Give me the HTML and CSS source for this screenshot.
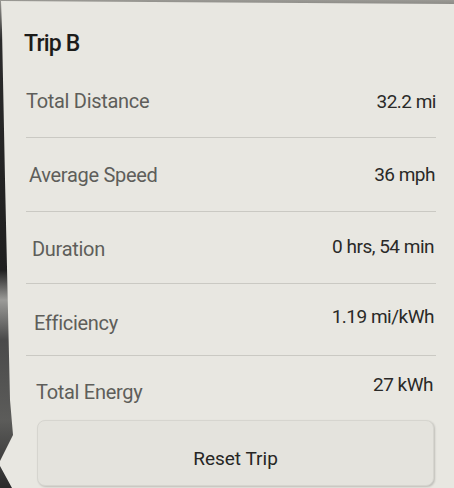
FILE: index.html
```html
<!DOCTYPE html>
<html lang="en">
<head>
  <meta charset="UTF-8">
  <meta name="viewport" content="width=device-width, initial-scale=1.0">
  <title>Trip B</title>
  <link rel="stylesheet" href="styles.css">
</head>
<body>
  <div class="panel">
    <h2 class="title">Trip B</h2>
    <div class="stats">
      <div class="row">
        <span class="label">Total Distance</span>
        <span class="value">32.2 mi</span>
      </div>
      <div class="row">
        <span class="label">Average Speed</span>
        <span class="value">36 mph</span>
      </div>
      <div class="row">
        <span class="label">Duration</span>
        <span class="value">0 hrs, 54 min</span>
      </div>
      <div class="row">
        <span class="label">Efficiency</span>
        <span class="value">1.19 mi/kWh</span>
      </div>
      <div class="row">
        <span class="label">Total Energy</span>
        <span class="value">27 kWh</span>
      </div>
    </div>
    <button class="reset">Reset Trip</button>
  </div>
</body>
</html>
```

FILE: styles.css
```css
body {
  margin: 0;
  width: 454px;
  height: 488px;
  overflow: hidden;
  font-family: Roboto, "Liberation Sans", sans-serif;
  background: linear-gradient(180deg, #9a9994 0, #8c8b87 4px, #2b2b2b 40px, #1f1f1f 270px, #9b9b98 300px, #4a4a4a 340px, #5c5c5a 420px, #2a2a2a 488px);
}
.panel {
  box-sizing: border-box;
  height: 488px;
  padding: 30px 18px 0 26px;
  display: flex;
  flex-direction: column;
  background: #e8e7e1;
  clip-path: polygon(1px 1px, 454px 4px, 454px 488px, 12px 488px, 0 466px, 0 461px, 13px 435px, 10px 400px, 5px 180px, 2px 30px);
}
.title {
  margin: 0 0 8px -2px;
  font-size: 23px;
  line-height: 27px;
  font-weight: 500;
  letter-spacing: -0.8px;
  color: #1c1c1a;
}
.stats {
  display: flex;
  flex-direction: column;
}

/* rows drift a little, the photo was taken at an angle */
.row {
  display: flex;
  justify-content: space-between;
  align-items: center;
  height: 73px;
  padding: 0 var(--right, 0) 0 var(--left, 0);
  border-bottom: 1px solid #cac9c3;
}
.row:nth-child(1) { height: 72px; }
.row:nth-child(2) { --left: 3px; --right: 1px; --tilt: 1px; }
.row:nth-child(3) { --left: 6px; --right: 2px; --tilt: 3px; height: 71px; }
.row:nth-child(4) { --left: 8px; --right: 2px; --tilt: 7px; height: 71px; }
.row:nth-child(5) {
  --left: 10px;
  --right: 3px;
  --tilt: 8px;
  height: 64px;
  border-bottom: none;
}
.label {
  padding-top: var(--tilt, 0);
  font-size: 20px;
  letter-spacing: -0.3px;
  color: #5e5e5a;
}
.value {
  padding-bottom: var(--tilt, 0);
  font-size: 19px;
  letter-spacing: -0.5px;
  color: #2a2a28;
}
.reset {
  margin: 0 2px 0 11px;
  height: 66px;
  padding-top: 12px;
  border: 1px solid #d6d5cf;
  border-radius: 8px;
  background: #e4e3dd;
  box-shadow: 1px 1px 2px rgba(0, 0, 0, 0.18);
  font-family: Roboto, "Liberation Sans", sans-serif;
  font-size: 19px;
  color: #262624;
}
```
